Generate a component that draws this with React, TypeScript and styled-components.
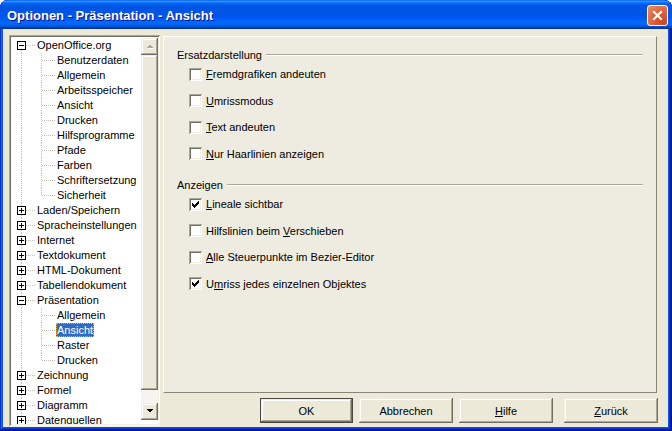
import React from 'react';
import styled, { createGlobalStyle } from 'styled-components';

const Global = createGlobalStyle`
  html, body { margin: 0; padding: 0; background: #ffffff; }
  body { font-family: "Liberation Sans", Arial, sans-serif; font-size: 11px; color: #000; }
  #root { width: 672px; height: 431px; }
`;

const raised = `
  background: #ECE9D8;
  box-shadow: inset -1px -1px #716F64, inset 1px 1px #F1EFE2, inset -2px -2px #ACA899, inset 2px 2px #FFFFFF;
`;
const sunken = `
  box-shadow: inset 1px 1px #ACA899, inset -1px -1px #FFFFFF, inset 2px 2px #716F64, inset -2px -2px #F1EFE2;
`;

const Window = styled.div`
  width: 672px;
  height: 431px;
  box-sizing: border-box;
  display: flex;
  flex-direction: column;
  background: #0855DD;
  border-radius: 8px 8px 0 0;
  overflow: hidden;
  box-shadow: inset -1px -1px #00138c, inset 1px 1px #0831d9, inset -2px -2px #001ea0,
    inset 2px 2px #166aee, inset -3px -3px #003bda, inset 3px 3px #0855dd;
`;

const TitleBar = styled.div`
  height: 29px;
  flex: none;
  display: flex;
  align-items: center;
  padding: 0 4px 0 7px;
  background: linear-gradient(to bottom, #0058EE 0%, #3593FF 4%, #288EFF 6%, #127DFF 8%, #036FFC 10%,
    #0262EE 14%, #0057E5 20%, #0054E3 24%, #0055EB 56%, #005BF5 66%, #026AFE 76%, #0062EF 86%,
    #0052D6 92%, #0040AB 94%, #003092 100%);
  border-radius: 8px 8px 0 0;
`;

const Title = styled.div`
  flex: 1;
  color: #fff;
  font-family: "Liberation Sans", Arial, sans-serif;
  font-weight: bold;
  font-size: 13px;
  text-shadow: 1px 1px #0F1089;
  margin-top: 1px;
`;

const CloseButton = styled.div`
  width: 21px;
  height: 21px;
  box-sizing: border-box;
  margin-top: 2px;
  border: 1px solid #ffffff;
  border-radius: 3px;
  background: radial-gradient(circle at 80% 85%, #CC4622 0%, #D9552F 30%, #E16A43 60%, #EE8E6E 100%);
  display: flex;
  align-items: center;
  justify-content: center;
`;

const Client = styled.div`
  flex: 1;
  margin: 0 4px 4px 3px;
  background: #ECE9D8;
  display: flex;
  gap: 3px;
  padding: 6px 11px 1px 6px;
  min-height: 0;
`;

const TreeBox = styled.div`
  width: 151px;
  flex: none;
  box-sizing: border-box;
  background: #fff;
  padding: 2px;
  display: flex;
  ${sunken}
`;

const TreeRows = styled.div`
  flex: 1;
  overflow: hidden;
  padding-top: 1px;
`;

const TreeRow = styled.div`
  height: 15px;
  display: flex;
  align-items: flex-start;
  white-space: nowrap;
`;

const TreeLabel = styled.span<{ $selected?: boolean }>`
  height: 14px;
  line-height: 14px;
  padding: 0 1px;
  box-sizing: border-box;
  background: ${(p) => (p.$selected ? '#316AC5' : 'transparent')};
  color: ${(p) => (p.$selected ? '#fff' : '#000')};
  outline: ${(p) => (p.$selected ? '1px dotted #E8B040' : 'none')};
  outline-offset: -1px;
`;

const ScrollCol = styled.div`
  width: 17px;
  flex: none;
  display: flex;
  flex-direction: column;
  padding: 1px 0 4px;
`;

const ScrollButton = styled.div`
  height: 17px;
  flex: none;
  display: flex;
  align-items: center;
  justify-content: center;
  ${raised}
`;

const ScrollThumb = styled.div`
  height: 335px;
  flex: none;
  ${raised}
`;

const ScrollTrack = styled.div`
  flex: 1;
  background: #F5F4EE;
`;

const RightCol = styled.div`
  flex: 1;
  display: flex;
  flex-direction: column;
  padding-top: 1px;
`;

const Panel = styled.div`
  height: 357px;
  box-sizing: border-box;
  border: 1px solid;
  border-color: #FFFFFF #8A877A #8A877A #FFFFFF;
  background: #EEEBE0;
  padding: 11px 13px 0 13px;
`;

const Group = styled.div<{ $first?: boolean }>`
  margin-top: ${(p) => (p.$first ? 0 : 18)}px;
`;

const GroupHeader = styled.div`
  height: 14px;
  display: flex;
  align-items: center;
`;

const GroupLine = styled.div`
  flex: 1;
  margin-left: 4px;
  border-top: 1px solid #ACA899;
  border-bottom: 1px solid #FFFFFF;
`;

const CheckList = styled.div`
  margin: 5.5px 0 0 12px;
  display: flex;
  flex-direction: column;
  gap: 13.5px;
`;

const CheckRow = styled.div`
  height: 13px;
  display: flex;
  align-items: center;
  gap: 4px;
  white-space: nowrap;
`;

const Box = styled.div`
  width: 13px;
  height: 13px;
  flex: none;
  box-sizing: border-box;
  background: #fff;
  display: flex;
  align-items: center;
  justify-content: center;
  ${sunken}
`;

const ButtonRow = styled.div`
  margin-top: 5px;
  margin-right: -1px;
  display: flex;
  justify-content: flex-end;
`;

const Button = styled.div<{ $default?: boolean; $gap: number }>`
  width: ${(p) => (p.$default ? 93 : 94)}px;
  height: 25px;
  box-sizing: border-box;
  margin-left: ${(p) => p.$gap}px;
  display: flex;
  align-items: center;
  justify-content: center;
  ${raised}
  border: ${(p) => (p.$default ? '1px solid #4A4840' : 'none')};
`;

type Node = {
  label: string;
  level: 0 | 1;
  exp?: 'plus' | 'minus';
  first?: boolean;
  lastChild?: boolean;
  selected?: boolean;
};

const nodes: Node[] = [
  { label: 'OpenOffice.org', level: 0, exp: 'minus', first: true },
  { label: 'Benutzerdaten', level: 1 },
  { label: 'Allgemein', level: 1 },
  { label: 'Arbeitsspeicher', level: 1 },
  { label: 'Ansicht', level: 1 },
  { label: 'Drucken', level: 1 },
  { label: 'Hilfsprogramme', level: 1 },
  { label: 'Pfade', level: 1 },
  { label: 'Farben', level: 1 },
  { label: 'Schriftersetzung', level: 1 },
  { label: 'Sicherheit', level: 1, lastChild: true },
  { label: 'Laden/Speichern', level: 0, exp: 'plus' },
  { label: 'Spracheinstellungen', level: 0, exp: 'plus' },
  { label: 'Internet', level: 0, exp: 'plus' },
  { label: 'Textdokument', level: 0, exp: 'plus' },
  { label: 'HTML-Dokument', level: 0, exp: 'plus' },
  { label: 'Tabellendokument', level: 0, exp: 'plus' },
  { label: 'Präsentation', level: 0, exp: 'minus' },
  { label: 'Allgemein', level: 1 },
  { label: 'Ansicht', level: 1, selected: true },
  { label: 'Raster', level: 1 },
  { label: 'Drucken', level: 1, lastChild: true },
  { label: 'Zeichnung', level: 0, exp: 'plus' },
  { label: 'Formel', level: 0, exp: 'plus' },
  { label: 'Diagramm', level: 0, exp: 'plus' },
  { label: 'Datenquellen', level: 0, exp: 'plus' },
];

const DOT = '#C9C1B4';

const Connector: React.FC<{ n: Node }> = ({ n }) => {
  if (n.level === 0) {
    return (
      <svg width="25" height="15" style={{ flex: 'none' }} shapeRendering="crispEdges">
        <line x1="10.5" y1={n.first ? 12 : 0} x2="10.5" y2="15" stroke={DOT} strokeDasharray="1 1" />
        <line x1="15" y1="7.5" x2="25" y2="7.5" stroke={DOT} strokeDasharray="1 1" />
        <rect x="6.5" y="3.5" width="8" height="8" fill="#fff" stroke="#000" />
        <line x1="8" y1="7.5" x2="13" y2="7.5" stroke="#000" />
        {n.exp === 'plus' && <line x1="10.5" y1="5" x2="10.5" y2="10" stroke="#000" />}
      </svg>
    );
  }
  return (
    <svg width="45" height="15" style={{ flex: 'none' }} shapeRendering="crispEdges">
      <line x1="10.5" y1="0" x2="10.5" y2="15" stroke={DOT} strokeDasharray="1 1" />
      <line x1="30.5" y1="0" x2="30.5" y2={n.lastChild ? 8 : 15} stroke={DOT} strokeDasharray="1 1" />
      <line x1="31" y1="7.5" x2="45" y2="7.5" stroke={DOT} strokeDasharray="1 1" />
    </svg>
  );
};

const Arrow: React.FC<{ dir: 'up' | 'down'; disabled?: boolean }> = ({ dir, disabled }) => {
  const pts = dir === 'up' ? '0,4 7,4 3.5,0.5' : '0,0 7,0 3.5,3.5';
  return (
    <svg width="8" height="5" viewBox="0 0 8 5" shapeRendering="crispEdges">
      {disabled && (
        <polygon points={dir === 'up' ? '1,5 8,5 4.5,1.5' : '1,1 8,1 4.5,4.5'} fill="#fff" />
      )}
      <polygon points={pts} fill={disabled ? '#ACA899' : '#000'} />
    </svg>
  );
};

const Check: React.FC = () => (
  <svg width="7" height="7" viewBox="0 0 7 7" shapeRendering="crispEdges">
    <polygon points="0,2 2,4 7,-1 7,2 2,7 0,5" fill="#000" />
  </svg>
);

type Opt = { pre?: string; key: string; post: string; checked?: boolean };

const group1: Opt[] = [
  { key: 'F', post: 'remdgrafiken andeuten' },
  { key: 'U', post: 'mrissmodus' },
  { key: 'T', post: 'ext andeuten' },
  { key: 'N', post: 'ur Haarlinien anzeigen' },
];
const group2: Opt[] = [
  { key: 'L', post: 'ineale sichtbar', checked: true },
  { pre: 'Hilfslinien beim ', key: 'V', post: 'erschieben' },
  { key: 'A', post: 'lle Steuerpunkte im Bezier-Editor' },
  { pre: 'U', key: 'm', post: 'riss jedes einzelnen Objektes', checked: true },
];

const OptionList: React.FC<{ items: Opt[] }> = ({ items }) => (
  <CheckList>
    {items.map((o, i) => (
      <CheckRow key={i}>
        <Box>{o.checked && <Check />}</Box>
        <span>
          {o.pre}
          <u>{o.key}</u>
          {o.post}
        </span>
      </CheckRow>
    ))}
  </CheckList>
);

export default function App() {
  return (
    <>
      <Global />
      <Window>
        <TitleBar>
          <Title>Optionen - Präsentation - Ansicht</Title>
          <CloseButton>
            <svg width="13" height="13" viewBox="0 0 13 13">
              <path d="M3 3 L10 10 M10 3 L3 10" stroke="#fff" strokeWidth="2.2" strokeLinecap="square" />
            </svg>
          </CloseButton>
        </TitleBar>
        <Client>
          <TreeBox>
            <TreeRows>
              {nodes.map((n, i) => (
                <TreeRow key={i}>
                  <Connector n={n} />
                  <TreeLabel $selected={n.selected}>{n.label}</TreeLabel>
                </TreeRow>
              ))}
            </TreeRows>
            <ScrollCol>
              <ScrollButton>
                <Arrow dir="up" disabled />
              </ScrollButton>
              <ScrollThumb />
              <ScrollTrack />
              <ScrollButton>
                <Arrow dir="down" />
              </ScrollButton>
            </ScrollCol>
          </TreeBox>
          <RightCol>
            <Panel>
              <Group $first>
                <GroupHeader>
                  <span>Ersatzdarstellung</span>
                  <GroupLine />
                </GroupHeader>
                <OptionList items={group1} />
              </Group>
              <Group>
                <GroupHeader>
                  <span>Anzeigen</span>
                  <GroupLine />
                </GroupHeader>
                <OptionList items={group2} />
              </Group>
            </Panel>
            <ButtonRow>
              <Button $default $gap={0}>OK</Button>
              <Button $gap={6}>Abbrechen</Button>
              <Button $gap={6}>
                <span>
                  <u>H</u>ilfe
                </span>
              </Button>
              <Button $gap={11}>
                <span>
                  <u>Z</u>urück
                </span>
              </Button>
            </ButtonRow>
          </RightCol>
        </Client>
      </Window>
    </>
  );
}
